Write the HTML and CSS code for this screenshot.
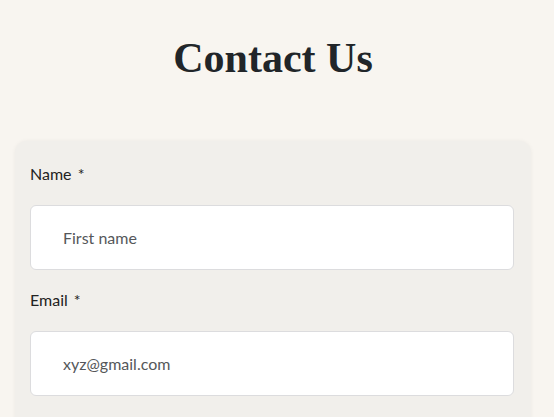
FILE: index.html
```html
<!DOCTYPE html>
<html lang="en">
<head>
<meta charset="utf-8">
<title>Contact Us</title>
<link rel="stylesheet" href="styles.css">
</head>
<body>
<main class="page">
  <h1 class="title">Contact Us</h1>
  <form class="card">
    <label class="label" for="name">Name *</label>
    <input class="field" id="name" type="text" placeholder="First name">
    <label class="label label-next" for="email">Email *</label>
    <input class="field" id="email" type="email" placeholder="xyz@gmail.com">
  </form>
</main>
</body>
</html>
```
FILE: styles.css
```css
html, body {
  margin: 0;
  padding: 0;
  background: #f8f5f0;
}
body {
  height: 417px;
  overflow: hidden;
}
.page {
  padding: 34px 8px 0 0;
}
.title {
  margin: 0;
  font-family: "Liberation Serif", serif;
  font-weight: bold;
  font-size: 42px;
  line-height: 48px;
  color: #212529;
  text-align: center;
}
.card {
  display: flex;
  flex-direction: column;
  margin: 59px 0 0 15px;
  width: 516px;
  box-sizing: border-box;
  padding: 21px 17px 60px 15px;
  background: #f1efeb;
  border-radius: 12px;
  box-shadow: 0 0 4px rgba(0, 0, 0, 0.05);
  font-family: "Lato", "Open Sans", sans-serif;
}
.label {
  font-size: 16px;
  line-height: 24px;
  color: #222222;
  word-spacing: 2px;
}
.label-next {
  margin-top: 18px;
}
.field {
  margin-top: 19px;
  height: 65px;
  box-sizing: border-box;
  width: 100%;
  padding: 0 32px;
  border: 1px solid #dcdcde;
  border-radius: 6px;
  background: #ffffff;
  font-family: inherit;
  font-size: 16px;
  color: #333;
  outline: none;
}
.field::placeholder {
  color: #55575a;
  opacity: 1;
}
```
